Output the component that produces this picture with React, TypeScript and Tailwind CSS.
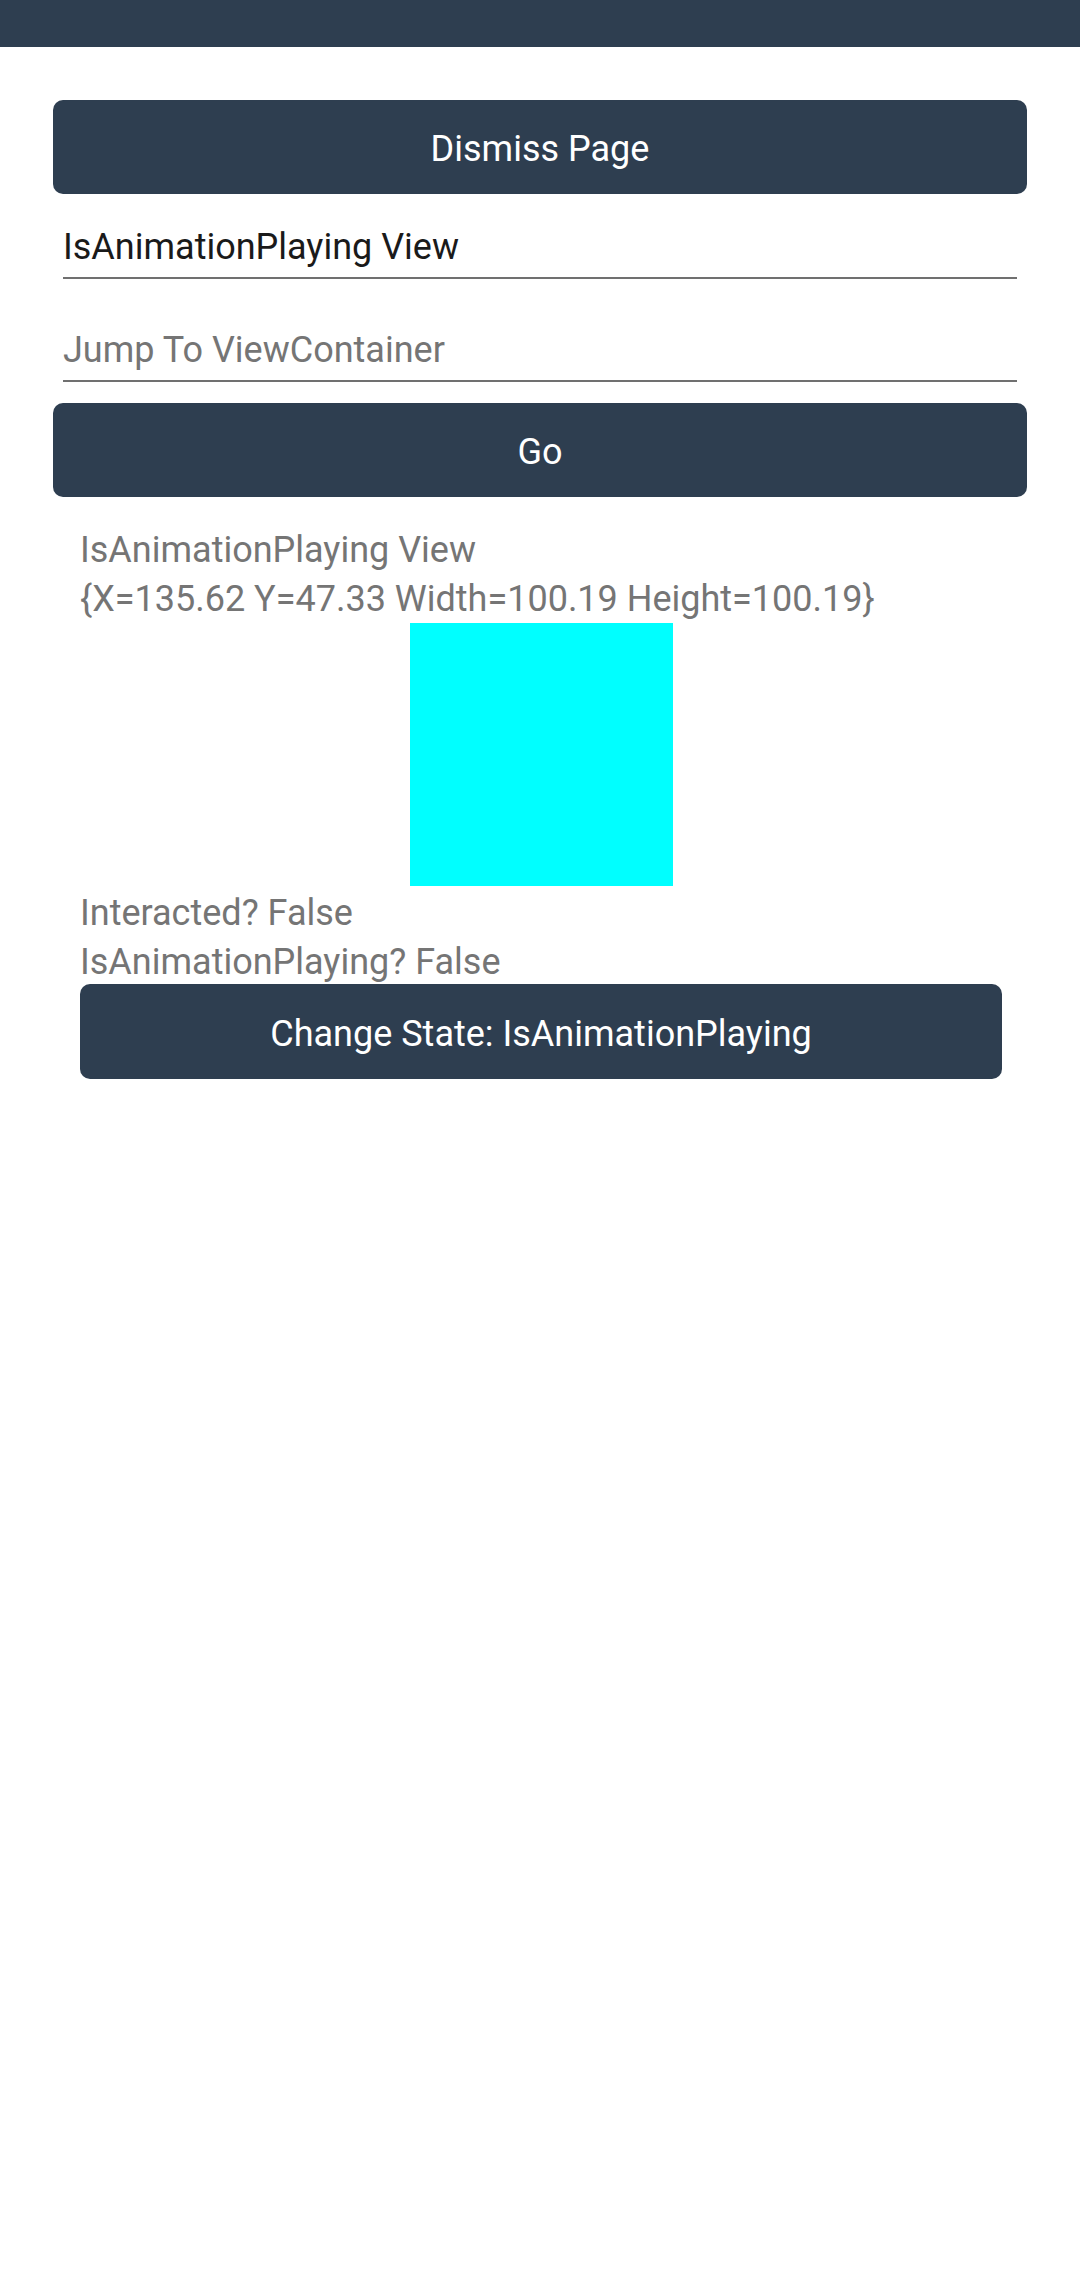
import React from "react";

const font = { fontFamily: "Roboto, 'Noto Sans', sans-serif" };

function Btn({ label, className = "" }: { label: string; className?: string }) {
  return (
    <div
      className={`flex items-center justify-center rounded-[10px] bg-[#2e3e50] pt-[5px] text-[36px] leading-[41px] text-white ${className}`}
    >
      {label}
    </div>
  );
}

function Entry({ text, placeholder }: { text?: string; placeholder?: string }) {
  return (
    <div className="mx-[10px] flex h-[103px] flex-col">
      <div className="h-[33px]" />
      <div
        className={`h-[41px] text-[36px] leading-[41px] ${text ? "text-[#1a1a1a]" : "text-[#757575]"}`}
      >
        {text ?? placeholder}
      </div>
      <div className="mt-[9px] h-[2px] w-full bg-[#707070]" />
    </div>
  );
}

export default function App() {
  return (
    <div className="min-h-[2289px] w-[1080px] bg-white" style={font}>
      <div className="h-[47px] w-full bg-[#2e3e50]" />
      <div className="flex flex-col px-[53px] pt-[53px]">
        <Btn label="Dismiss Page" className="h-[94px]" />
        <Entry text="IsAnimationPlaying View" />
        <Entry placeholder="Jump To ViewContainer" />
        <Btn label="Go" className="mt-[3px] h-[94px]" />
        <div className="mt-[28px] flex flex-col pl-[27px] pr-[25px]">
          <div className="pt-[1px] text-[36px] leading-[49px] text-[#757575]">IsAnimationPlaying View</div>
          <div className="-mb-[1px] text-[36px] leading-[49px] text-[#757575]">
            {"{X=135.62 Y=47.33 Width=100.19 Height=100.19}"}
          </div>
          <div className="flex justify-center">
            <div className="h-[263px] w-[263px] bg-[#00ffff]" />
          </div>
          <div className="mt-[3px] text-[36px] leading-[49px] text-[#757575]">Interacted? False</div>
          <div className="text-[36px] leading-[49px] text-[#757575]">IsAnimationPlaying? False</div>
          <Btn label="Change State: IsAnimationPlaying" className="-mt-[3px] h-[95px]" />
        </div>
      </div>
    </div>
  );
}
